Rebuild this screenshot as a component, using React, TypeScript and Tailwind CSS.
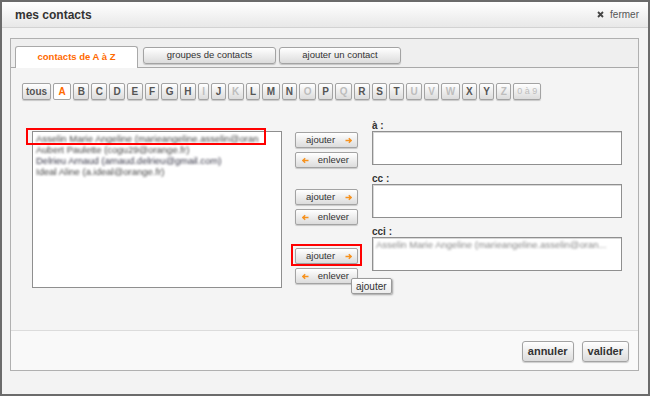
import React from "react";

const LETTERS: { l: string; off?: boolean }[] = [
  { l: "B" }, { l: "C" }, { l: "D" }, { l: "E" }, { l: "F" }, { l: "G" }, { l: "H" },
  { l: "I", off: true }, { l: "J" }, { l: "K", off: true }, { l: "L" }, { l: "M" }, { l: "N" },
  { l: "O", off: true }, { l: "P" }, { l: "Q", off: true }, { l: "R" }, { l: "S" }, { l: "T" },
  { l: "U", off: true }, { l: "V", off: true }, { l: "W", off: true }, { l: "X" }, { l: "Y" },
  { l: "Z", off: true },
];

const btn =
  "bg-linear-to-b from-white to-[#dcdcdc] border border-[#a3a3a3] rounded-[2px] shadow-[0_1px_1px_rgba(0,0,0,0.18)]";

function ArrowRight() {
  return (
    <svg width="7" height="7" viewBox="0 0 7 7" className="shrink-0">
      <path d="M0.5 3.5H6M3.8 1.2L6.2 3.5L3.8 5.8" stroke="#f7921e" strokeWidth="1.4" fill="none" />
    </svg>
  );
}
function ArrowLeft() {
  return (
    <svg width="7" height="7" viewBox="0 0 7 7" className="shrink-0">
      <path d="M6.5 3.5H1M3.2 1.2L0.8 3.5L3.2 5.8" stroke="#f7921e" strokeWidth="1.4" fill="none" />
    </svg>
  );
}

function Ajouter({ className = "" }: { className?: string }) {
  return (
    <div className={`${btn} h-[16px] w-[63px] flex items-center pl-[10px] pr-[5px] justify-between text-[9.5px] text-[#333] ${className}`}>
      <span>ajouter</span>
      <ArrowRight />
    </div>
  );
}
function Enlever({ className = "" }: { className?: string }) {
  return (
    <div className={`${btn} h-[16px] w-[63px] flex items-center pl-[6px] pr-[8px] justify-between text-[9.5px] text-[#333] ${className}`}>
      <ArrowLeft />
      <span>enlever</span>
    </div>
  );
}

export default function App() {
  return (
    <div className="w-[650px] h-[396px] border-2 border-[#6b6b6b] bg-[#f3f3f3] flex flex-col font-['Liberation_Sans',Arial,sans-serif] text-[#333] overflow-hidden">
      {/* header */}
      <div className="h-[26px] shrink-0 bg-linear-to-b from-white to-[#e8e8e8] border-b border-[#d2d2d2] flex items-center justify-between pl-[13px] pr-[9px]">
        <span className="text-[12px] font-bold text-[#333] leading-none">mes contacts</span>
        <div className="flex items-center gap-[6px] text-[10px] text-[#555]">
          <svg width="7" height="7" viewBox="0 0 7 7">
            <path d="M1 1L6 6M6 1L1 6" stroke="#444" strokeWidth="1.8" />
          </svg>
          <span>fermer</span>
        </div>
      </div>

      {/* body */}
      <div className="pl-[8px] pr-[9px] pt-[10px]">
        <div className="h-[333px] border border-[#b0b0b0] bg-[#f4f4f4] flex flex-col">
          {/* tab strip */}
          <div className="h-[29px] shrink-0 bg-[#efefef] border-b border-[#a9a9a9] flex items-end pl-[4px]">
            <div className="relative -mb-px h-[22px] w-[123px] bg-white border border-b-0 border-[#a9a9a9] rounded-t-[3px] flex items-center justify-center text-[9.5px] font-bold text-[#ff6a00]">
              contacts de A à Z
            </div>
            <div className={`${btn} rounded-[3px] ml-[5px] mb-[3px] h-[17px] w-[133px] flex items-center justify-center text-[9.5px]`}>
              groupes de contacts
            </div>
            <div className={`${btn} rounded-[3px] ml-[3px] mb-[3px] h-[17px] w-[122px] flex items-center justify-center text-[9.5px]`}>
              ajouter un contact
            </div>
          </div>

          {/* content */}
          <div className="h-[262px] shrink-0 flex flex-col">
            {/* letters */}
            <div className="ml-[11px] mt-[15px] flex items-center text-[10px] font-bold text-[#555]">
              <div className={`${btn} h-[17px] px-[3px] flex items-center`}>tous</div>
              <div className="ml-[2px] h-[17px] px-[4.5px] flex items-center bg-white border border-[#a3a3a3] rounded-[2px] text-[#ff6a00]">
                A
              </div>
              {LETTERS.map((x) => (
                <div
                  key={x.l}
                  className={`${btn} ml-[2px] h-[17px] px-[3.37px] flex items-center ${x.off ? "text-[#bdbdbd]" : "text-[#555]"}`}
                >
                  {x.l}
                </div>
              ))}
              <div className={`${btn} ml-[2px] h-[17px] px-[3px] flex items-center text-[9px] font-normal text-[#bdbdbd]`}>
                0 à 9
              </div>
            </div>

            {/* main row */}
            <div className="ml-[21px] mt-[20px] flex items-start">
              {/* list */}
              <div className="relative mt-[11px]">
                <div className="w-[250px] h-[157px] bg-white border border-[#8f8f8f] pt-[1px] pl-[3px] text-[9.5px] leading-[11px] text-[#444] overflow-hidden">
                  <div className="[filter:blur(1px)] whitespace-nowrap">
                    <div>Asselin Marie Angeline (marieangeline.asselin@oran</div>
                    <div>Aubert Paulette (cogu29@orange.fr)</div>
                    <div className="text-[#334]">Delrieu Arnaud (arnaud.delrieu@gmail.com)</div>
                    <div>Ideal Aline (a.ideal@orange.fr)</div>
                  </div>
                </div>
                <div className="absolute left-[-6px] top-[-3px] w-[240px] h-[17px] border-2 border-[#ff0000]" />
              </div>

              {/* middle buttons */}
              <div className="ml-[13px] w-[63px] flex flex-col">
                <Ajouter className="mt-[12px]" />
                <Enlever className="mt-[4px]" />
                <Ajouter className="mt-[21px]" />
                <Enlever className="mt-[4px]" />
                <div className="relative mt-[23px]">
                  <Ajouter />
                  <div className="absolute left-[-4px] top-[-4px] w-[71px] h-[22px] border-2 border-[#ff0000]" />
                </div>
                <div className="relative mt-[4px]">
                  <Enlever />
                  <div className="absolute left-[56px] top-[10px] h-[16px] px-[4px] flex items-center bg-linear-to-b from-white to-[#ececec] border border-[#9a9a9a] rounded-[2px] shadow-[1px_1px_2px_rgba(0,0,0,0.35)] text-[10px] text-[#333] whitespace-nowrap">
                    ajouter
                  </div>
                </div>
              </div>

              {/* right fields */}
              <div className="ml-[14px] w-[250px] flex flex-col text-[10px]">
                <div className="h-[11px] leading-[11px] font-bold text-[#333]">à :</div>
                <div className="h-[34px] bg-white border border-[#8f8f8f] shadow-[inset_1px_1px_0_#d8d8d8]" />
                <div className="mt-[8px] h-[11px] leading-[11px] font-bold text-[#333]">cc :</div>
                <div className="h-[34px] bg-white border border-[#8f8f8f] shadow-[inset_1px_1px_0_#d8d8d8]" />
                <div className="mt-[8px] h-[11px] leading-[11px] font-bold text-[#333]">cci :</div>
                <div className="h-[34px] bg-white border border-[#8f8f8f] shadow-[inset_1px_1px_0_#d8d8d8] pl-[3px] pt-[1px] overflow-hidden">
                  <div className="[filter:blur(1px)] whitespace-nowrap text-[9.5px] leading-[11px] text-[#888]">
                    Asselin Marie Angeline (marieangeline.asselin@oran...
                  </div>
                </div>
              </div>
            </div>
          </div>

          {/* footer */}
          <div className="flex-1 border-t border-[#dcdcdc] bg-[#f9f9f9] flex justify-end items-start pt-[10px] pr-[9px] gap-[8px]">
            <div className={`${btn} rounded-[3px] h-[21px] px-[5px] flex items-center text-[11px] font-bold text-[#333]`}>annuler</div>
            <div className={`${btn} rounded-[3px] h-[21px] px-[5px] flex items-center text-[11px] font-bold text-[#333]`}>valider</div>
          </div>
        </div>
      </div>
    </div>
  );
}
